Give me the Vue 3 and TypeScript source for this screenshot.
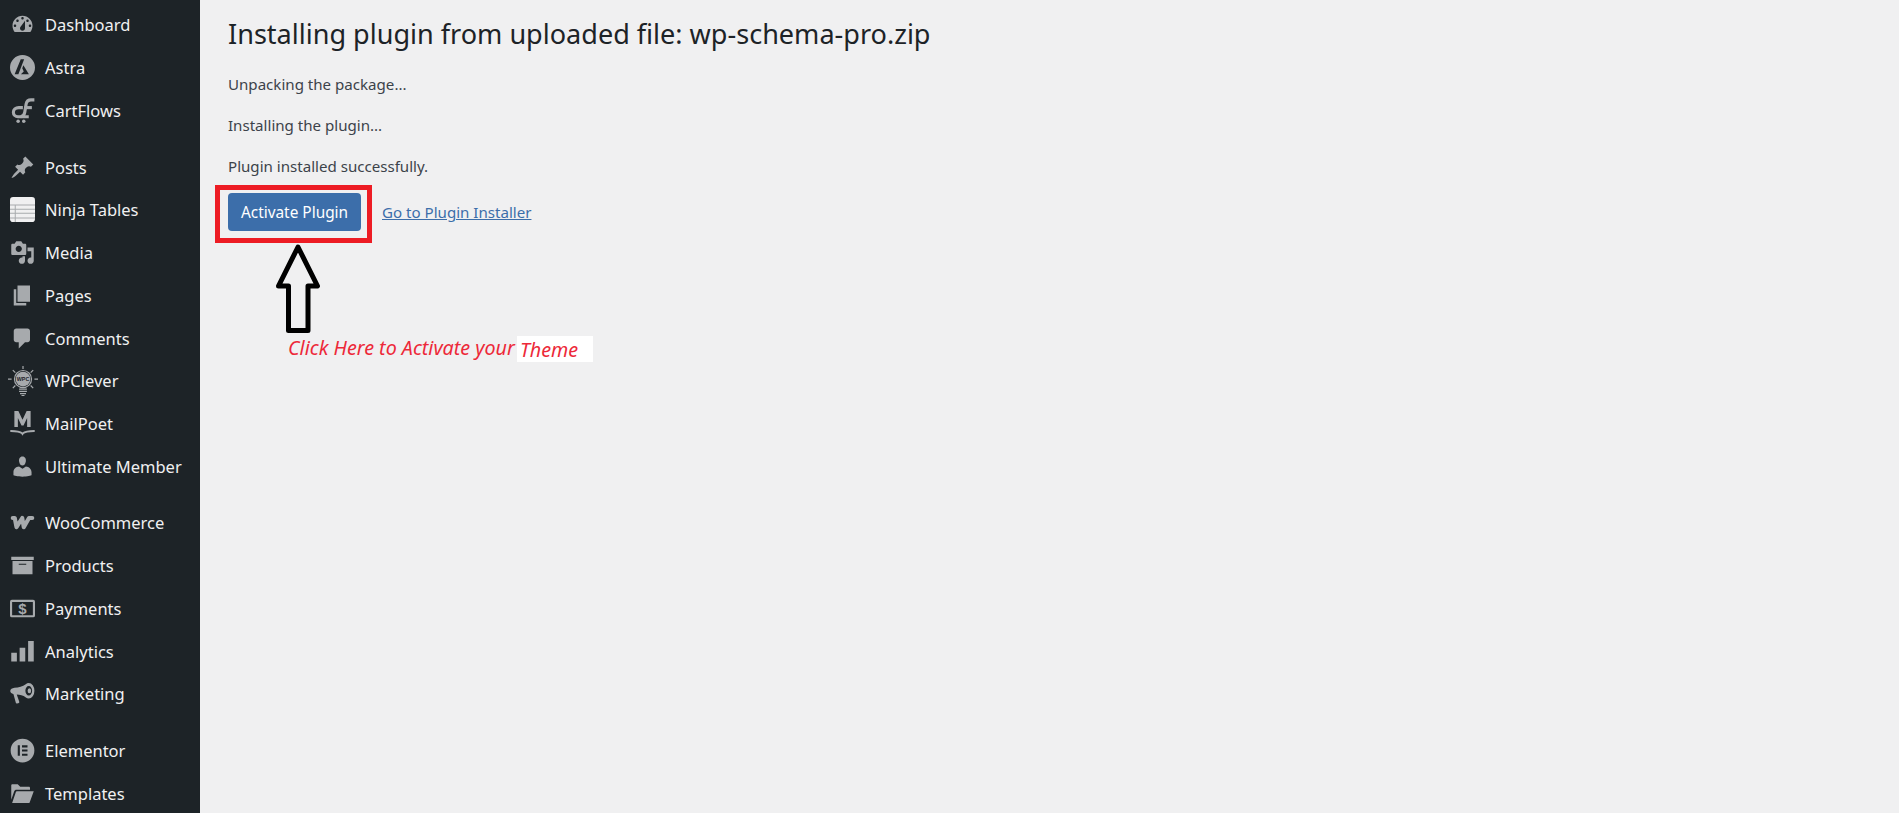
<script setup lang="ts">
interface Item { label: string; icon: string; large?: boolean }

const p = (d: string) => `<path fill-rule="evenodd" d="${d}"/>`

const groups: Item[][] = [
  [
    { label: 'Dashboard', icon: p('M3.76 16h12.48c1.1-1.37 1.76-3.11 1.76-5 0-4.42-3.58-8-8-8s-8 3.58-8 8c0 1.89.66 3.63 1.76 5zM10 4c.55 0 1 .45 1 1s-.45 1-1 1-1-.45-1-1 .45-1 1-1zM6 6c.55 0 1 .45 1 1s-.45 1-1 1-1-.45-1-1 .45-1 1-1zm8 0c.55 0 1 .45 1 1s-.45 1-1 1-1-.45-1-1 .45-1 1-1zm-5.37 5.55L12 7v6c0 1.1-.9 2-2 2s-2-.9-2-2c0-.57.24-1.08.63-1.45zM4 10c.55 0 1 .45 1 1s-.45 1-1 1-1-.45-1-1 .45-1 1-1zm12 0c.55 0 1 .45 1 1s-.45 1-1 1-1-.45-1-1 .45-1 1-1z') },
    { label: 'Astra', icon: p('M10 0a10 10 0 1 0 0 20 10 10 0 0 0 0-20zM8.600 3.400h2.700L6.700 15.400H3.700zM10.700 8.200l4.400 7.200H8.700l2.300-2.300-1.200-2.500z') },
    { label: 'CartFlows', icon: '<g fill="none" stroke="currentColor" stroke-width="2.500"><path d="M10.300 7.700H7C4.400 7.700 2.700 9.300 2.700 11.400S4.300 15 6.400 15H15"/><path d="M19.500 1.500h-2.700c-2.400 0-3.500 1.300-3.900 3.300l-1.100 6.600c-.3 1.800-1.200 3.300-3.300 3.600"/><path d="M11.500 7.700h6"/></g><circle cx="6.500" cy="18.600" r="1.400"/><circle cx="11" cy="18.600" r="1.400"/>' },
  ],
  [
    { label: 'Posts', icon: p('M10.44 3.02l1.82-1.82 6.36 6.35-1.83 1.82c-1.05-.68-2.48-.57-3.41.36l-.75.75c-.92.93-1.04 2.35-.35 3.41l-1.83 1.82-2.41-2.41-2.8 2.79c-.42.42-3.38 2.71-3.8 2.29s1.86-3.39 2.28-3.81l2.79-2.79L4.1 9.36l1.83-1.82c1.05.69 2.48.57 3.4-.36l.75-.75c.93-.92 1.05-2.35.36-3.41z') },
    { label: 'Ninja Tables', icon: '<rect width="20" height="20" rx="2.500" fill="#f0f0f1"/><path fill="#a7aaad" d="M0 6h20v.8H0zM0 9.300h20v.8H0zM0 12.600h20v.8H0zM0 16.400h20v.8H0zM3.800 6h.8v14h-.8z"/>' },
    { label: 'Media', icon: p('M13 11V4c0-.55-.45-1-1-1h-1.670L9 1H5L3.670 3H2c-.55 0-1 .45-1 1v7c0 .55.45 1 1 1h10c.55 0 1-.45 1-1zM7 4.500c1.380 0 2.500 1.120 2.500 2.500S8.380 9.500 7 9.500 4.500 8.380 4.500 7 5.620 4.500 7 4.500zM14 6h5v10.500c0 1.380-1.120 2.500-2.500 2.500S14 17.880 14 16.500s1.120-2.500 2.500-2.500c.17 0 .34.02.5.05V9h-3V6zm-4 8.050V13h2v3.500c0 1.380-1.120 2.500-2.500 2.500S7 17.880 7 16.500 8.120 14 9.500 14c.17 0 .34.02.5.05z') },
    { label: 'Pages', icon: p('M6 15V2h10v13H6zm-1 1h8v2H3V5h2v11z') },
    { label: 'Comments', icon: p('M5 2h9c1.100 0 2 .9 2 2v7c0 1.100-.9 2-2 2h-2l-5 5v-5H5c-1.100 0-2-.9-2-2V4c0-1.100.9-2 2-2z') },
    { label: 'WPClever', large: true, icon: '<g fill="none" stroke="currentColor" stroke-width=".8"><path d="M10 0v2M0 8.700h2.400M17.600 8.700H20M3.200 2.700l1.700 1.700M16.800 2.700l-1.700 1.700M3.200 14.700l1.700-1.700M16.800 14.700l-1.700-1.700"/><circle cx="10" cy="8.700" r="5.700"/></g><circle cx="10" cy="8.700" r="4.900"/><path d="M7.400 15h5.200v.9H7.400zM7.400 16.500h5.200v.9H7.400zM8 18h4v.9H8zM9 19.300h2v.7H9z"/><text x="10" y="10" text-anchor="middle" font-size="3.600" font-weight="700" fill="#1d2327" font-family="Liberation Sans, sans-serif">WPC</text>' },
    { label: 'MailPoet', icon: '<path d="M3.500 0h3.200L10 7l3.300-7h3.200v12.800h-2.800V5.500l-2.900 6H9.200l-2.900-6v7.300H3.500z"/><path fill="none" stroke="currentColor" stroke-width="1.500" stroke-linecap="round" d="M.8 16c3.200 0 6.800.3 9.200 2 2.400-1.700 6-2 9.200-2"/><path d="M9 18h2l-1 1.800z"/>' },
    { label: 'Ultimate Member', icon: p('M10 9.250c-2.270 0-2.730-3.440-2.730-3.440C7 4.020 7.820 2 9.970 2c2.160 0 2.980 2.020 2.710 3.810 0 0-.41 3.440-2.680 3.440zm0 2.570L12.720 10c2.390 0 4.520 2.330 4.520 4.530v2.490s-3.650 1.130-7.240 1.130c-3.650 0-7.240-1.130-7.240-1.130v-2.490c0-2.250 1.940-4.480 4.470-4.480z') },
  ],
  [
    { label: 'WooCommerce', icon: '<path fill="none" stroke="currentColor" stroke-width="3.300" stroke-linejoin="round" stroke-linecap="round" d="M2.200 6.400h1.600l1.400 7.300 4.600-7.300 1.200 7.300 4.200-7.300h2.600"/>' },
    { label: 'Products', icon: p('M19 3v2.600H1V3h18zM2 6.400h16V17H2V6.400zm11 3V8.500H7v.9h6z') },
    { label: 'Payments', icon: '<path fill-rule="evenodd" d="M1.500 3h17A1.500 1.500 0 0 1 20 4.500v11a1.500 1.500 0 0 1-1.500 1.500h-17A1.500 1.500 0 0 1 0 15.500v-11A1.500 1.500 0 0 1 1.500 3zM1.700 4.700v10.600h16.600V4.700z"/><text x="10" y="14.300" text-anchor="middle" font-size="12" font-weight="700" font-family="Liberation Sans, sans-serif">$</text>' },
    { label: 'Analytics', icon: p('M1 11h4.500v7H1zM7.700 7h4.500v11H7.700zM14.500 1.500H19V18h-4.500z') },
    { label: 'Marketing', icon: '<path fill-rule="evenodd" d="M15 1.500a4.500 6.200 0 0 1 0 12.500c-.9 0-1.700-.3-2.300-.9C10.500 11.500 7.800 10.800 5.400 10.800l2 5.700c.2.600-.2 1.100-.8 1.200l-1 .2c-.5.1-.9-.2-1-.7L2.800 10.500C1.300 10.100.2 9.100.2 8c0-1.300 1.500-2.400 3.400-2.600 3.500-.2 6.500-1 9-2.900.7-.6 1.500-1 2.400-1zm0 2.400c-1.500 0-2.700 1.700-2.700 3.800s1.200 3.800 2.700 3.800 2.700-1.700 2.700-3.800-1.200-3.800-2.700-3.800z"/><ellipse cx="15.500" cy="7.700" rx="1.400" ry="2"/>' },
  ],
  [
    { label: 'Elementor', icon: p('M10 .5a9.500 9.500 0 1 0 0 19 9.500 9.500 0 0 0 0-19zM6.200 5.800h1.700v8.400H6.200zM9.600 5.800h4.400v1.700H9.600zM9.600 9.150h4.400v1.700H9.600zM9.600 12.500h4.400v1.700H9.600z') },
    { label: 'Templates', icon: '<path d="M1 15V3.500c0-.6.4-1 1-1h4.200l2 2H15c.6 0 1 .4 1 1V7H5.200c-.9 0-1.600.5-1.900 1.300z"/><path d="M1.700 17.500l3-8.800c.1-.4.400-.6.800-.6h13.500l-3.300 9c-.1.300-.4.400-.7.400z"/>' },
  ],
]
</script>

<template>
  <div class="page">
    <nav class="sidebar">
      <ul v-for="(group, g) in groups" :key="g" class="group">
        <li v-for="item in group" :key="item.label" class="row">
          <svg class="icon" :class="{ 'icon-large': item.large }" viewBox="0 0 20 20" fill="currentColor" v-html="item.icon"></svg>
          <span class="label">{{ item.label }}</span>
        </li>
      </ul>
    </nav>

    <main class="main">
      <h1 class="title">Installing plugin from uploaded file: wp-schema-pro.zip</h1>
      <p class="msg">Unpacking the package...</p>
      <p class="msg">Installing the plugin...</p>
      <p class="msg">Plugin installed successfully.</p>
      <div class="actions">
        <button class="primary" type="button">Activate Plugin</button>
        <a class="link" href="#">Go to Plugin Installer</a>
      </div>

      <div class="highlight"></div>
      <svg class="arrow" viewBox="0 0 52 94" width="52" height="94">
        <path d="M26 5 L45.500 44 H36 V88.500 H16.500 V44 H6.500 Z" fill="none" stroke="#000" stroke-width="5" stroke-linejoin="round" />
      </svg>
      <div class="note">
        <span class="note-text">Click Here to Activate your</span>
        <span class="note-box">Theme</span>
      </div>
    </main>
  </div>
</template>

<style scoped>
.page {
  display: flex;
  width: 1899px;
  height: 813px;
  overflow: hidden;
  background: #f0f0f1;
  font-family: "Noto Sans", "Open Sans", sans-serif;
}
.sidebar {
  flex: 0 0 200px;
  background: #1d2327;
  padding-top: 3.500px;
  box-sizing: border-box;
}
.group {
  list-style: none;
  margin: 0 0 13.900px;
  padding: 0;
}
.row {
  display: flex;
  align-items: center;
  height: 42.750px;
  padding-left: 10px;
  color: #f0f0f1;
  font-size: 16.500px;
}
.icon {
  flex: 0 0 25px;
  width: 25px;
  height: 25px;
  margin-right: 10px;
  color: #a7aaad;
}
.icon-large {
  flex-basis: 30px;
  width: 30px;
  height: 32px;
  margin-left: -2.500px;
  margin-right: 7.500px;
}
.label {
  white-space: nowrap;
}
.main {
  position: relative;
  flex: 1;
  padding: 0 0 0 28px;
  color: #3c434a;
}
.title {
  margin: 17px 0 0;
  font-size: 27.050px;
  font-weight: 400;
  line-height: 34px;
  color: #1d2327;
}
.msg {
  margin: 0;
  height: 41px;
  line-height: 41px;
  font-size: 15.100px;
}
.title + .msg {
  margin-top: 13px;
}
.actions {
  display: flex;
  align-items: center;
  gap: 21px;
  margin-top: 6px;
}
.primary {
  width: 133px;
  height: 38px;
  padding: 0;
  border: 0;
  border-radius: 4px;
  background: #3c6eaa;
  color: #fff;
  font: inherit;
  font-size: 15.400px;
}
.link {
  color: #3c6eaa;
  font-size: 15.100px;
  text-decoration: underline;
}
.highlight {
  position: absolute;
  left: 15px;
  top: 185px;
  width: 157px;
  height: 58px;
  box-sizing: border-box;
  border: 5px solid #ed1c24;
}
.arrow {
  position: absolute;
  left: 72px;
  top: 242px;
}
.note {
  position: absolute;
  left: 88px;
  top: 334px;
  display: flex;
  height: 26px;
  align-items: center;
  color: #ed2939;
  font-style: italic;
  font-size: 19.700px;
}
.note-text {
  width: 229px;
  white-space: nowrap;
}
.note-box {
  width: 76px;
  height: 26px;
  line-height: 28px;
  padding-left: 3px;
  margin-top: 4px;
  box-sizing: border-box;
  background: #fff;
}
</style>
